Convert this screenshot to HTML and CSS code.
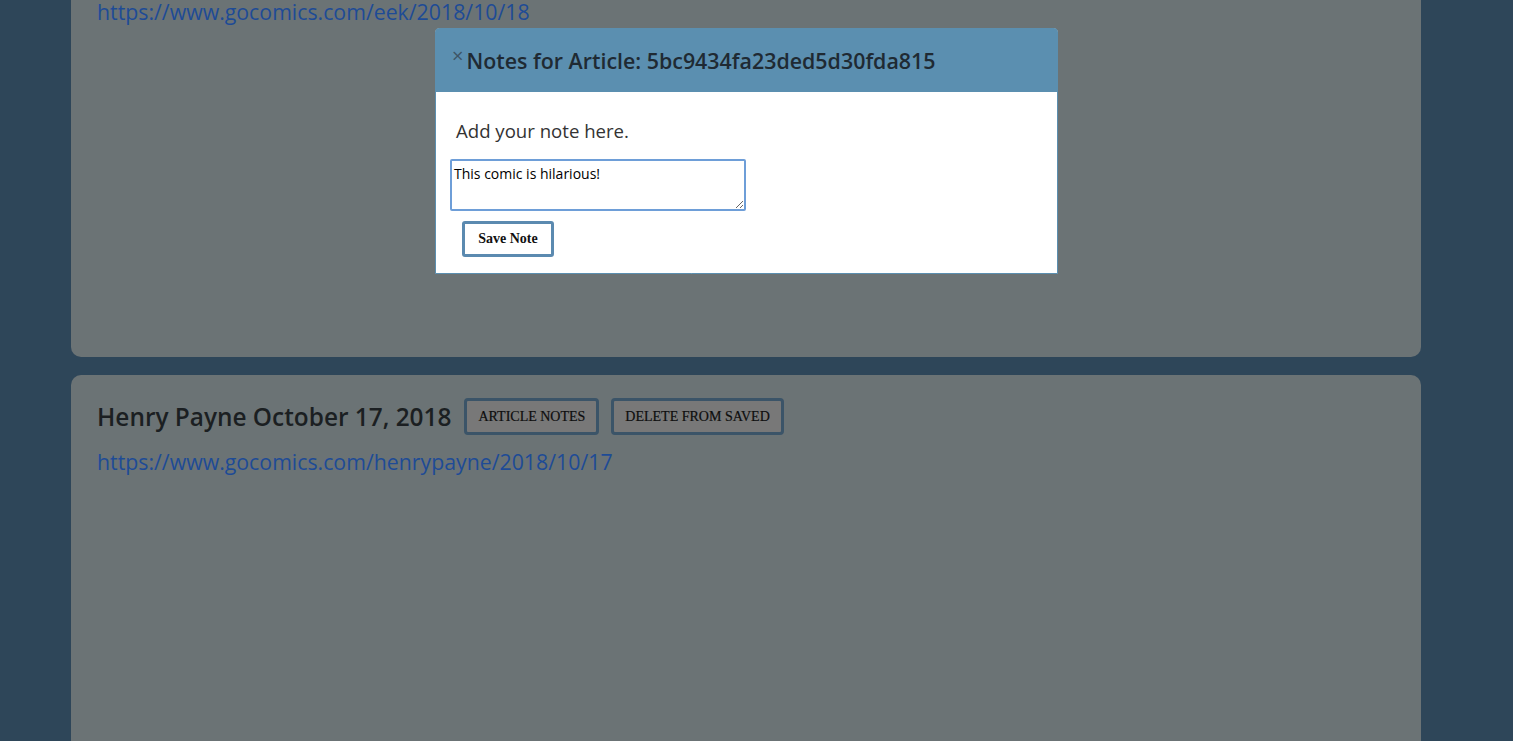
FILE: index.html
```html
<!DOCTYPE html>
<html>
<head>
<meta charset="utf-8">
<link rel="stylesheet" href="styles.css">
</head>
<body>
<main class="saved">
  <section class="card">
    <div class="card-head">
      <h2 class="card-title">Eek October 18, 2018</h2>
      <button class="card-btn">ARTICLE NOTES</button>
      <button class="card-btn">DELETE FROM SAVED</button>
    </div>
    <a class="card-link" href="#">https://www.gocomics.com/eek/2018/10/18</a>
  </section>
  <section class="card">
    <div class="card-head">
      <h2 class="card-title">Henry Payne October 17, 2018</h2>
      <button class="card-btn">ARTICLE NOTES</button>
      <button class="card-btn">DELETE FROM SAVED</button>
    </div>
    <a class="card-link" href="#">https://www.gocomics.com/henrypayne/2018/10/17</a>
  </section>
</main>
<div class="modal">
  <div class="modal-head">
    <span class="modal-close">&times;</span><h3 class="modal-title">Notes for Article: 5bc9434fa23ded5d30fda815</h3>
  </div>
  <div class="modal-body">
    <p class="modal-hint">Add your note here.</p>
    <textarea class="note-input">This comic is hilarious!</textarea>
    <div><button class="save-btn">Save Note</button></div>
  </div>
</div>
<script src="app.js"></script>
</body>
</html>
```
FILE: styles.css
```css
html, body {
  margin: 0;
  padding: 0;
}
body {
  background: #2e4659;
  font-family: "Open Sans", "Noto Sans", sans-serif;
  min-height: 2000px;
}
.saved {
  display: flex;
  flex-direction: column;
  gap: 18px;
  padding: 18px 92px 0 71px;
}
.card {
  background: #6b7375;
  border-radius: 10px;
  min-height: 432px;
  box-sizing: border-box;
  padding: 23px 26px;
}
.card-head {
  display: flex;
  align-items: center;
  gap: 12px;
}
.card-title {
  margin: 0 1px 0 0;
  font-size: 24.4px;
  font-weight: 600;
  color: #1b1f22;
}
.card-btn {
  font-family: "Liberation Serif", serif;
  font-size: 14px;
  line-height: 17px;
  padding: 7px 11px;
  background: #787878;
  color: #0e0e0e;
  border: 3px solid #3b5468;
  border-radius: 4px;
  -webkit-text-stroke: 0.2px #0e0e0e;
}
.card-link {
  display: block;
  margin-top: 12px;
  font-size: 21.3px;
  line-height: 30px;
  color: #1e4b96;
  text-decoration: none;
}
.modal {
  position: fixed;
  left: 435px;
  top: 28px;
  width: 621px;
  border: 1px solid #5b8fb0;
  border-radius: 4px 4px 0 0;
  background: #fff;
}
.modal-head {
  background: #5b8fb0;
  height: 63px;
  display: flex;
  align-items: center;
  padding-left: 16px;
}
.modal-close {
  font-size: 20px;
  color: #3d5566;
  align-self: flex-start;
  margin-top: 17px;
  line-height: 20px;
  margin-right: 3px;
}
.modal-title {
  margin: 0;
  font-size: 21.4px;
  font-weight: 600;
  color: #1f2a33;
}
.modal-body {
  padding: 27px 14px 16px;
}
.modal-hint {
  margin: 0 0 16px 6px;
  font-size: 18.6px;
  line-height: 24px;
  color: #333;
}
.note-input {
  display: block;
  width: 296px;
  height: 52px;
  box-sizing: border-box;
  border: 2px solid #6e9ed8;
  border-radius: 2px;
  padding: 3px 2px;
  font-family: "Open Sans", "Noto Sans", sans-serif;
  font-size: 14px;
  color: #000;
  resize: both;
  outline: none;
}
.save-btn {
  margin: 10px 0 0 12px;
  width: 92px;
  height: 36px;
  background: #fff;
  border: 3px solid #5b8ab0;
  border-radius: 3px;
  font-family: "Liberation Serif", serif;
  font-size: 14px;
  font-weight: 600;
  color: #111;
}
```
FILE: app.js
```js
window.scrollTo(0, 93);
```
